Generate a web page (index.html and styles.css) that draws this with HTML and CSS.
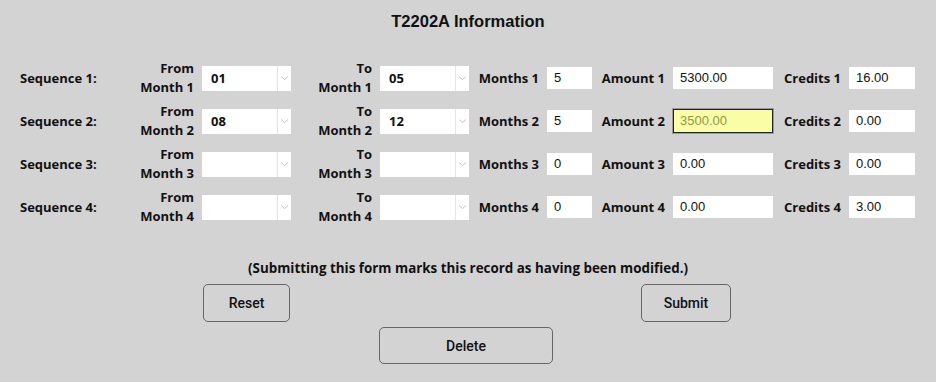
FILE: index.html
```html
<!DOCTYPE html>
<html lang="en">
<head>
    <meta charset="UTF-8">
    <meta name="viewport" content="width=device-width, initial-scale=1.0">
    <title>T2202A Information</title>
    <link rel="stylesheet" href="styles.css">
</head>
<body>

    <h1 class="title">T2202A Information</h1>

    <form id="t2202a" onsubmit="return false;">
        <div class="grid">
            <!-- Sequence 1 -->
            <div class="seq">Sequence 1:</div>
            <div class="lbl">From<br>Month 1</div>
            <div class="pick"><select><option>01</option></select><span class="arrow"><svg width="9" height="6" viewBox="0 0 9 6"><path d="M1 1.5 L4.5 4.5 L8 1.5" fill="none" stroke="#c4c4c4" stroke-width="1"/></svg></span></div>
            <div class="lbl">To<br>Month 1</div>
            <div class="pick"><select><option>05</option></select><span class="arrow"><svg width="9" height="6" viewBox="0 0 9 6"><path d="M1 1.5 L4.5 4.5 L8 1.5" fill="none" stroke="#c4c4c4" stroke-width="1"/></svg></span></div>
            <div class="lbl">Months 1</div>
            <input class="field" type="text" value="5">
            <div class="lbl">Amount 1</div>
            <input class="field" type="text" value="5300.00">
            <div class="lbl">Credits 1</div>
            <input class="field" type="text" value="16.00">

            <!-- Sequence 2 -->
            <div class="seq">Sequence 2:</div>
            <div class="lbl">From<br>Month 2</div>
            <div class="pick"><select><option>08</option></select><span class="arrow"><svg width="9" height="6" viewBox="0 0 9 6"><path d="M1 1.5 L4.5 4.5 L8 1.5" fill="none" stroke="#c4c4c4" stroke-width="1"/></svg></span></div>
            <div class="lbl">To<br>Month 2</div>
            <div class="pick"><select><option>12</option></select><span class="arrow"><svg width="9" height="6" viewBox="0 0 9 6"><path d="M1 1.5 L4.5 4.5 L8 1.5" fill="none" stroke="#c4c4c4" stroke-width="1"/></svg></span></div>
            <div class="lbl">Months 2</div>
            <input class="field" type="text" value="5">
            <div class="lbl">Amount 2</div>
            <input class="field active" type="text" value="3500.00">
            <div class="lbl">Credits 2</div>
            <input class="field" type="text" value="0.00">

            <!-- Sequence 3 -->
            <div class="seq">Sequence 3:</div>
            <div class="lbl">From<br>Month 3</div>
            <div class="pick"><select><option></option></select><span class="arrow"><svg width="9" height="6" viewBox="0 0 9 6"><path d="M1 1.5 L4.5 4.5 L8 1.5" fill="none" stroke="#c4c4c4" stroke-width="1"/></svg></span></div>
            <div class="lbl">To<br>Month 3</div>
            <div class="pick"><select><option></option></select><span class="arrow"><svg width="9" height="6" viewBox="0 0 9 6"><path d="M1 1.5 L4.5 4.5 L8 1.5" fill="none" stroke="#c4c4c4" stroke-width="1"/></svg></span></div>
            <div class="lbl">Months 3</div>
            <input class="field" type="text" value="0">
            <div class="lbl">Amount 3</div>
            <input class="field" type="text" value="0.00">
            <div class="lbl">Credits 3</div>
            <input class="field" type="text" value="0.00">

            <!-- Sequence 4 -->
            <div class="seq">Sequence 4:</div>
            <div class="lbl">From<br>Month 4</div>
            <div class="pick"><select><option></option></select><span class="arrow"><svg width="9" height="6" viewBox="0 0 9 6"><path d="M1 1.5 L4.5 4.5 L8 1.5" fill="none" stroke="#c4c4c4" stroke-width="1"/></svg></span></div>
            <div class="lbl">To<br>Month 4</div>
            <div class="pick"><select><option></option></select><span class="arrow"><svg width="9" height="6" viewBox="0 0 9 6"><path d="M1 1.5 L4.5 4.5 L8 1.5" fill="none" stroke="#c4c4c4" stroke-width="1"/></svg></span></div>
            <div class="lbl">Months 4</div>
            <input class="field" type="text" value="0">
            <div class="lbl">Amount 4</div>
            <input class="field" type="text" value="0.00">
            <div class="lbl">Credits 4</div>
            <input class="field" type="text" value="3.00">
        </div>

        <p class="note">(Submitting this form marks this record as having been modified.)</p>

        <div class="actions">
            <button class="btn reset" type="reset">Reset</button>
            <button class="btn submit" type="submit">Submit</button>
        </div>
        <div class="actions-center">
            <button class="btn delete" type="button">Delete</button>
        </div>
    </form>

</body>
</html>
```

FILE: styles.css
```css
body {
    margin: 0;
    background-color: #d3d3d3;
    font-family: "Open Sans", Lato, sans-serif;
    color: #111;
}
.title {
    font-family: "Liberation Sans", Arial, sans-serif;
    font-size: 16.5px;
    font-weight: bold;
    text-align: center;
    line-height: 20px;
    margin: 11px 0 0 0;
}
#t2202a {
    padding-left: 20px;
}
.grid {
    margin-top: 28px;
    display: grid;
    grid-template-columns: 100px 82px 89px 89px 89px 78px 45px 81px 100px 76px 66px;
    grid-auto-rows: 38px;
    row-gap: 5px;
    align-items: center;
}
.seq {
    font-size: 13px;
    font-weight: bold;
}
.lbl {
    font-size: 13px;
    font-weight: bold;
    line-height: 19px;
    text-align: right;
    padding-right: 8px;
}
.pick {
    display: flex;
    height: 25px;
    background-color: #fff;
}
.pick select {
    -webkit-appearance: none;
    appearance: none;
    flex: 1;
    min-width: 0;
    border: none;
    background: #fff;
    padding: 0 0 0 9px;
    font-family: "Open Sans", Lato, sans-serif;
    font-size: 13px;
    font-weight: bold;
    color: #111;
}
.pick .arrow {
    width: 13px;
    border-left: 1px solid #e4e4e4;
    display: flex;
    align-items: center;
    justify-content: center;
}
.field {
    box-sizing: border-box;
    height: 22px;
    width: 100%;
    border: 1px solid #fff;
    background-color: #fff;
    padding: 0 0 2px 6px;
    font-family: "Liberation Sans", Arial, sans-serif;
    font-size: 13px;
    color: #111;
}
.field.active {
    height: 24px;
    border: 1px solid #1c2430;
    box-shadow: 0 0 0 1px #9a9a9a;
    background-color: #fafda6;
    color: #8d9a4c;
}
.note {
    margin: 33px 0 0 -20px;
    text-align: center;
    font-size: 13.4px;
    font-weight: bold;
    line-height: 18px;
}
.actions {
    width: 528px;
    margin: 7px 0 0 183px;
    display: flex;
    justify-content: space-between;
}
.actions-center {
    margin: 5px 0 0 -24px;
    display: flex;
    justify-content: center;
}
.btn {
    height: 38px;
    background-color: #d3d3d3;
    border: 1px solid #666;
    border-radius: 5px;
    font-family: Roboto, "Liberation Sans", sans-serif;
    font-size: 14px;
    font-weight: 500;
    color: #111;
    cursor: pointer;
}
.reset {
    width: 87px;
}
.submit {
    width: 90px;
}
.delete {
    width: 174px;
    height: 37px;
}
```
